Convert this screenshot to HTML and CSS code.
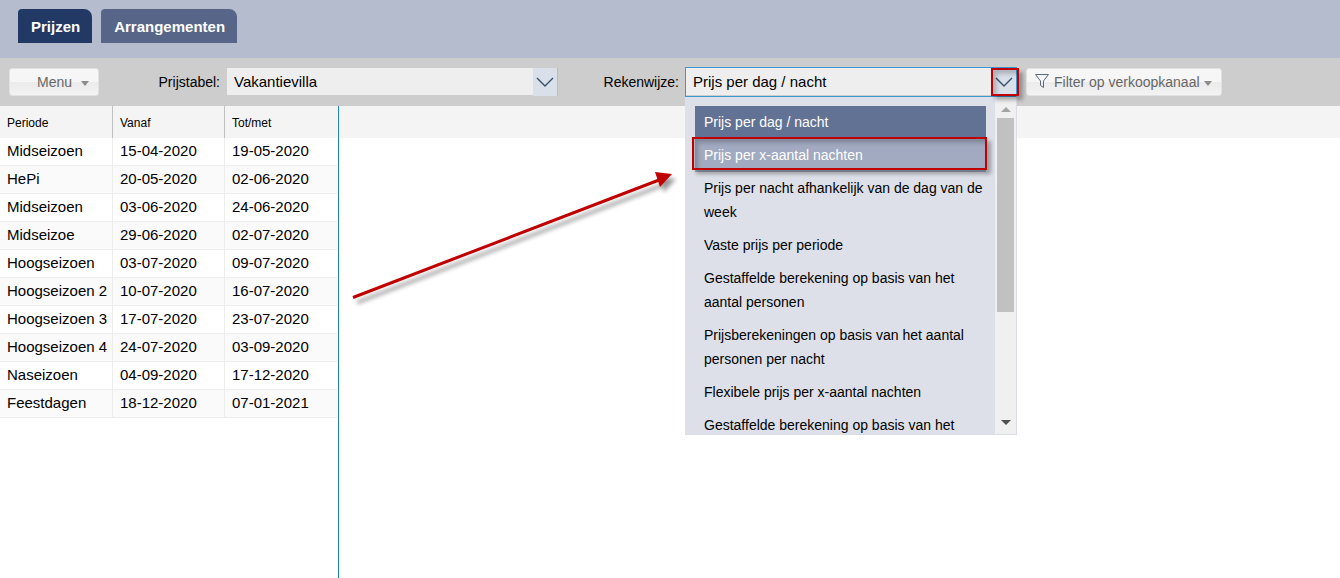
FILE: index.html
```html
<!DOCTYPE html>
<html lang="nl">

<head>
    <meta charset="UTF-8">
    <meta name="viewport" content="width=device-width, initial-scale=1.0">
    <title>Prijzen</title>
    <link rel="stylesheet" href="styles.css">
</head>

<body>
    <nav class="tabs">
        <a href="#prijzen" class="tab active">Prijzen</a>
        <a href="#arrangementen" class="tab">Arrangementen</a>
    </nav>

    <div class="toolbar">
        <button type="button" class="button menu">Menu <span class="caret"></span></button>

        <div class="field">
            <label for="prijstabel">Prijstabel:</label>
            <div class="combo">
                <select id="prijstabel">
                    <option>Vakantievilla</option>
                </select>
                <span class="arrow">
                    <svg width="18" height="10" viewBox="0 0 18 10"><path d="M1 1l8 8 8-8" /></svg>
                </span>
            </div>
        </div>

        <div class="field">
            <label for="rekenwijze">Rekenwijze:</label>
            <div class="combo open">
                <select id="rekenwijze">
                    <option>Prijs per dag / nacht</option>
                    <option>Prijs per x-aantal nachten</option>
                </select>
                <span class="arrow">
                    <svg width="18" height="10" viewBox="0 0 18 10"><path d="M1 1l8 8 8-8" /></svg>
                </span>
                <span class="mark mark-arrow"></span>

                <div class="dropdown">
                    <ul class="options" role="listbox" aria-label="Rekenwijze">
                        <li role="option" class="selected">Prijs per dag / nacht</li>
                        <li role="option" class="hover">Prijs per x-aantal nachten<span class="mark mark-option"></span></li>
                        <li role="option">Prijs per nacht afhankelijk van de dag van de week</li>
                        <li role="option">Vaste prijs per periode</li>
                        <li role="option">Gestaffelde berekening op basis van het aantal personen</li>
                        <li role="option">Prijsberekeningen op basis van het aantal personen per nacht</li>
                        <li role="option">Flexibele prijs per x-aantal nachten</li>
                        <li role="option">Gestaffelde berekening op basis van het</li>
                    </ul>
                    <div class="scrollbar">
                        <span class="up"></span>
                        <span class="thumb"></span>
                        <span class="down"></span>
                    </div>
                </div>
            </div>
        </div>

        <button type="button" class="button filter">
            <svg width="16" height="16" viewBox="0 0 16 16"><path d="M1.5 1.5h13L9.500 8v6.500l-3-2V8z" /></svg>
            Filter op verkoopkanaal <span class="caret"></span>
        </button>
    </div>

    <main class="content">
        <div class="periods">
            <table>
                <thead>
                    <tr>
                        <th class="name">Periode</th>
                        <th>Vanaf</th>
                        <th>Tot/met</th>
                    </tr>
                </thead>
                <tbody>
                    <tr><td>Midseizoen</td><td>15-04-2020</td><td>19-05-2020</td></tr>
                    <tr><td>HePi</td><td>20-05-2020</td><td>02-06-2020</td></tr>
                    <tr><td>Midseizoen</td><td>03-06-2020</td><td>24-06-2020</td></tr>
                    <tr><td>Midseizoe</td><td>29-06-2020</td><td>02-07-2020</td></tr>
                    <tr><td>Hoogseizoen</td><td>03-07-2020</td><td>09-07-2020</td></tr>
                    <tr><td>Hoogseizoen 2</td><td>10-07-2020</td><td>16-07-2020</td></tr>
                    <tr><td>Hoogseizoen 3</td><td>17-07-2020</td><td>23-07-2020</td></tr>
                    <tr><td>Hoogseizoen 4</td><td>24-07-2020</td><td>03-09-2020</td></tr>
                    <tr><td>Naseizoen</td><td>04-09-2020</td><td>17-12-2020</td></tr>
                    <tr><td>Feestdagen</td><td>18-12-2020</td><td>07-01-2021</td></tr>
                </tbody>
            </table>
        </div>
        <div class="prices">
            <div class="prices-head"></div>
            <svg class="pointer" width="345" height="140" viewBox="0 0 345 140">
                <path class="line" d="M14 131.5L320 14" />
                <path class="head" d="M316 6l17 2-12 13z" />
            </svg>
        </div>
    </main>
</body>

</html>
```
FILE: styles.css
```css
* {
    margin: 0;
    padding: 0;
    box-sizing: border-box;
}

body {
    min-height: 100vh;
    display: flex;
    flex-direction: column;
    background-color: #fff;
    color: #000;
    font-family: "Liberation Sans", Arial, sans-serif;
    font-size: 14px;
}

/* tabs */
.tabs {
    display: flex;
    gap: 9px;
    padding: 9px 18px 15px;
    background-color: #b4bccd;
}

.tab {
    padding: 2px 12px 0 13px;
    line-height: 32px;
    border-radius: 4px 8px 0 0;
    background-color: #576688;
    color: #fff;
    font-size: 15px;
    font-weight: bold;
    text-decoration: none;
}

.tab.active {
    background-color: #233965;
}

/* toolbar */
.toolbar {
    display: flex;
    align-items: center;
    height: 48px;
    padding: 0 9px;
    background-color: #cdcdcd;
}

.button {
    display: flex;
    align-items: center;
    flex-shrink: 0;
    height: 28px;
    border: 1px solid #e2e2e2;
    border-radius: 3px;
    background: linear-gradient(#f6f6f6 50%, #ebebeb 50%, #f3f3f3);
    color: #666;
    font-family: inherit;
    font-size: 14px;
}

.menu {
    width: 90px;
    justify-content: flex-end;
    gap: 9px;
    padding-right: 9px;
}

.filter {
    gap: 4px;
    margin-left: 9px;
    padding: 0 9px 0 7px;
}

.filter svg {
    fill: none;
    stroke: #5b6b7b;
    margin-bottom: 3px;
}

.caret {
    margin-top: 2px;
    border: 4px solid transparent;
    border-top: 5px solid #8c8c8c;
    border-bottom: 0;
}

.field {
    display: flex;
    align-items: center;
    justify-content: flex-end;
    gap: 6px;
    width: 459px;
}

.combo {
    position: relative;
    width: 332px;
    height: 30px;
    border: 1px solid transparent;
}

.combo select {
    display: block;
    appearance: none;
    width: 100%;
    height: 27px;
    padding: 0 30px 0 7px;
    border: 0;
    border-radius: 0;
    outline: 0;
    background-color: #eee;
    color: #000;
    font-family: inherit;
    font-size: 15px;
}

.combo.open {
    border-color: #3c97d3;
}

.arrow {
    position: absolute;
    top: 0;
    right: -1px;
    display: flex;
    align-items: center;
    justify-content: center;
    width: 25px;
    height: 28px;
    border-right: 1px solid #b4bccd;
    background-color: #dae0ea;
    pointer-events: none;
}

.open .arrow {
    border-right-color: #3c97d3;
}

.arrow svg {
    fill: none;
    stroke: #34506b;
    stroke-width: 1.4;
}

/* dropdown */
.dropdown {
    position: absolute;
    z-index: 1;
    top: 28px;
    left: -1px;
    display: flex;
    width: 332px;
    height: 339px;
    border: 1px solid #dadde4;
    border-top-color: #3c97d3;
    border-left: 0;
    background-color: #dde0e8;
    overflow: hidden;
}

.options {
    flex: 1;
    padding: 9px 9px 0 10px;
    list-style: none;
}

.options li {
    position: relative;
    padding: 4px 0 5px 9px;
    line-height: 24px;
}

.options .selected {
    background-color: #627294;
    color: #fff;
}

.options .hover {
    background-color: #a1aac0;
    color: #fff;
}

.scrollbar {
    display: flex;
    flex-direction: column;
    align-items: center;
    width: 21px;
    padding: 10px 0 9px;
    background-color: #f0f0f0;
}

.up,
.down {
    border: 5px solid transparent;
}

.up {
    border-top: 0;
    border-bottom-color: #a3a3a3;
}

.down {
    margin-top: auto;
    border-bottom: 0;
    border-top-color: #505050;
}

.thumb {
    width: 17px;
    height: 194px;
    margin-top: 6px;
    background-color: #c1c1c1;
}

/* red markers */
.mark {
    position: absolute;
    border: 2px solid #c00000;
    box-shadow: 4px 4px 4px rgba(0, 0, 0, 0.3), inset 4px 4px 4px rgba(0, 0, 0, 0.2);
    pointer-events: none;
}

.mark-arrow {
    z-index: 2;
    top: 0;
    right: -3px;
    width: 28px;
    height: 28px;
}

.mark-option {
    top: -2px;
    right: -1px;
    bottom: 2px;
    left: -3px;
}

/* content */
.content {
    flex: 1;
    display: flex;
}

.periods {
    width: 339px;
    border-right: 1px solid #1c84c6;
}

table {
    width: 337px;
    table-layout: fixed;
    border-collapse: separate;
    border-spacing: 0;
}

th {
    height: 32px;
    padding: 2px 7px 0;
    border-right: 1px solid #c0c0c0;
    background-color: #f4f4f4;
    font-size: 12px;
    font-weight: normal;
    text-align: left;
}

td {
    height: 28px;
    padding: 0 7px 2px;
    border-right: 1px solid #ededed;
    border-bottom: 1px solid #ededed;
    font-size: 15px;
    white-space: nowrap;
}

.name {
    width: 113px;
}

th:last-child,
td:last-child {
    border-right: 0;
}

tbody tr:nth-child(even) {
    background-color: #fafafa;
}

.prices {
    position: relative;
    flex: 1;
}

.prices-head {
    height: 32px;
    background-color: #f4f4f4;
}

.pointer {
    position: absolute;
    top: 60px;
    left: 0;
    filter: drop-shadow(4px 5px 2px rgba(0, 0, 0, 0.4));
}

.pointer .line {
    stroke: #c00000;
    stroke-width: 3;
}

.pointer .head {
    fill: #c00000;
}
```
